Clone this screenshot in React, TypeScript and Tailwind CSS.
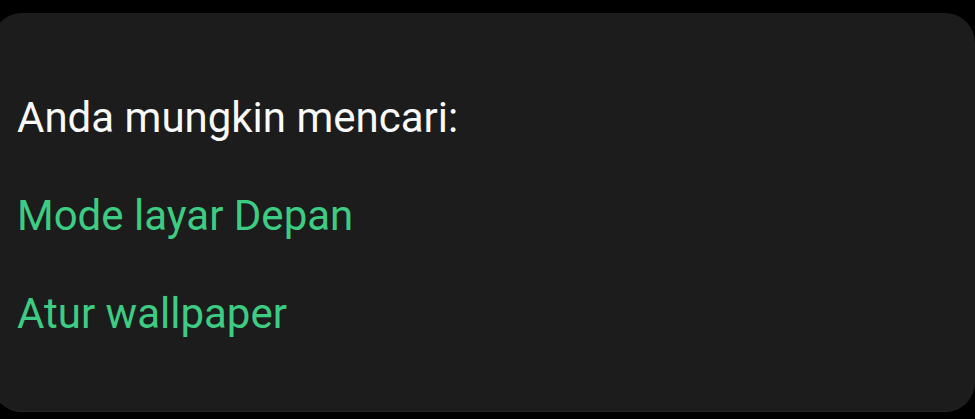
export default function App() {
  return (
    <main className="min-h-screen w-full overflow-hidden bg-black pt-[13px] font-['Roboto',sans-serif]">
      <div className="-ml-2 flex h-[399px] w-[calc(100%+8px)] flex-col gap-[49px] rounded-[30px] border-b border-[#262626] bg-[#1c1c1c] pl-[25px] pt-[80px] text-[42px] leading-[49px]">
        <span className="text-[#fafafa]">Anda mungkin mencari:</span>
        <span className="text-[#3dcc83]">Mode layar Depan</span>
        <span className="text-[#3dcc83]">Atur wallpaper</span>
      </div>
    </main>
  );
}
